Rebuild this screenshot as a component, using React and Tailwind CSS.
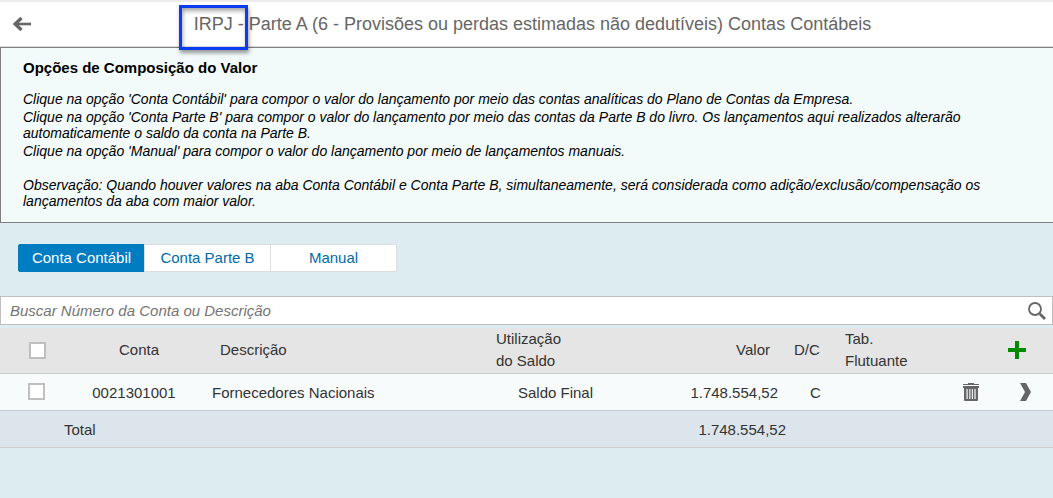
import React, { useState } from "react";

const TABS = ["Conta Contábil", "Conta Parte B", "Manual"];

const ROWS = [
  {
    conta: "0021301001",
    descricao: "Fornecedores Nacionais",
    saldo: "Saldo Final",
    valor: "1.748.554,52",
    dc: "C",
  },
];

function BackIcon() {
  return (
    <svg width="18" height="14" viewBox="0 0 18 14" fill="none" stroke="#666" strokeWidth="2.6">
      <path d="M2 7H18" />
      <path d="M8.5 1L2.2 7L8.5 13" strokeWidth="3.4" />
    </svg>
  );
}

function SearchIcon() {
  return (
    <svg width="18" height="18" viewBox="0 0 18 18" fill="none" stroke="#666">
      <circle cx="7" cy="7" r="6" strokeWidth="1.8" />
      <path d="M11 11L13 13" strokeWidth="1.6" />
      <path d="M12 12L17 17" strokeWidth="2.8" />
    </svg>
  );
}

function PlusIcon() {
  return (
    <svg width="18" height="18" viewBox="0 0 18 18" fill="#008a00">
      <path d="M7 0H11V7H18V11H11V18H7V11H0V7H7Z" />
    </svg>
  );
}

function TrashIcon() {
  return (
    <svg width="16" height="18" viewBox="0 0 16 18" fill="#666">
      <path d="M5 0H11V1H16V2H0V1H5Z" />
      <path
        fillRule="evenodd"
        d="M0 3H16V5H15V17Q15 18 14 18H2Q1 18 1 17V5H0ZM3.5 6V16H4.7V6ZM6.3 6V16H7.4V6ZM8.8 6V16H9.9V6ZM11.4 6V16H12.6V6Z"
      />
    </svg>
  );
}

function ChevronIcon() {
  return (
    <svg width="11" height="18" viewBox="0 0 11 18" fill="#666">
      <path d="M0 0H6L11 9L6 18H0L5 9Z" />
    </svg>
  );
}

function Checkbox({ label }) {
  return (
    <input
      type="checkbox"
      aria-label={label}
      className="block size-[17px] appearance-none border-2 border-[#bfbfbf] bg-white checked:bg-[#007cc0]"
    />
  );
}

function App() {
  const [tab, setTab] = useState(TABS[0]);
  const [search, setSearch] = useState("");

  return (
    <div className="min-h-screen bg-[#dcecf0] font-['Liberation_Sans',Arial,sans-serif] text-[#333]">
      {/* HEADER */}
      <header className="flex h-[47px] items-center border-t-2 border-b border-t-[#ececec] border-b-[#d9d9d9] bg-white">
        <button type="button" aria-label="Voltar" className="w-11 pl-[13px]">
          <BackIcon />
        </button>
        <h1 className="flex-1 pr-8 text-center text-[18px] text-[#666]">
          <span className="relative">
            IRPJ
            <span className="absolute -inset-x-[15px] -top-[9px] h-[45px] border-3 border-[#0a3cf0] shadow-[1px_3px_4px_rgba(0,0,0,0.4),inset_1px_3px_4px_rgba(0,0,0,0.35)]" />
          </span>{" "}
          - Parte A (6 - Provisões ou perdas estimadas não dedutíveis) Contas Contábeis
        </h1>
      </header>

      {/* INSTRUCTIONS */}
      <section className="border border-r-0 border-[#808080] bg-[#f2fafa] pt-3 pr-12 pb-[13px] pl-[22px] text-[14px] leading-4 text-black">
        <h2 className="mb-[15px] text-[15px] font-bold">Opções de Composição do Valor</h2>
        <div className="flex flex-col gap-0.5 italic">
          <p>
            Clique na opção 'Conta Contábil' para compor o valor do lançamento por meio das
            contas analíticas do Plano de Contas da Empresa.
          </p>
          <p>
            Clique na opção 'Conta Parte B' para compor o valor do lançamento por meio das
            contas da Parte B do livro. Os lançamentos aqui realizados alterarão
            automaticamente o saldo da conta na Parte B.
          </p>
          <p>
            Clique na opção 'Manual' para compor o valor do lançamento por meio de
            lançamentos manuais.
          </p>
          <p className="mt-4">
            Observação: Quando houver valores na aba Conta Contábil e Conta Parte B,
            simultaneamente, será considerada como adição/exclusão/compensação os
            lançamentos da aba com maior valor.
          </p>
        </div>
      </section>

      {/* TABS */}
      <div className="flex px-[18px] pt-[21px] pb-6">
        {TABS.map((name) => (
          <button
            key={name}
            type="button"
            onClick={() => setTab(name)}
            className={`h-7 w-[127px] border text-[15px] not-first:-ml-px first:rounded-l-xs last:rounded-r-xs ${
              tab === name
                ? "border-[#007cc0] bg-[#007cc0] text-white"
                : "border-[#ddd] bg-white text-[#006ca7]"
            }`}
          >
            {name}
          </button>
        ))}
      </div>

      {/* SEARCH */}
      <div className="mb-[3px] flex h-[29px] items-center border border-[#bfbfbf] bg-white pr-[6px]">
        <input
          type="text"
          aria-label="Buscar conta"
          value={search}
          onChange={(e) => setSearch(e.target.value)}
          placeholder="Buscar Número da Conta ou Descrição"
          className="h-full flex-1 px-[9px] text-[15px] placeholder:text-[#757575] placeholder:italic focus:outline-none"
        />
        <button type="button" aria-label="Buscar">
          <SearchIcon />
        </button>
      </div>

      {/* ACCOUNTS */}
      <table className="w-full table-fixed text-left text-[15px]">
        <colgroup>
          <col className="w-16" />
          <col className="w-[140px]" />
          <col />
          <col className="w-[120px]" />
          <col className="w-[182px]" />
          <col className="w-[46px]" />
          <col className="w-[110px]" />
          <col className="w-[50px]" />
          <col className="w-[57px]" />
        </colgroup>
        <thead>
          <tr className="h-[45px] border-b border-[#ccc] bg-[#e5e5e5] leading-[22px] *:font-normal">
            <th className="pl-[29px]">
              <Checkbox label="Selecionar todas" />
            </th>
            <th className="pr-[10px] pl-5 text-center">Conta</th>
            <th className="pl-4">Descrição</th>
            <th className="pr-8 pl-2">Utilização do Saldo</th>
            <th className="pr-5 text-right">Valor</th>
            <th className="pl-1">D/C</th>
            <th className="pr-8 pl-[9px]">Tab. Flutuante</th>
            <th />
            <th className="pl-3">
              <button type="button" aria-label="Adicionar" className="block">
                <PlusIcon />
              </button>
            </th>
          </tr>
        </thead>
        <tbody>
          {ROWS.map((row) => (
            <tr key={row.conta} className="h-[37px] border-b border-[#ccc] bg-[#f7fbfc]">
              <td className="pl-7">
                <Checkbox label={`Selecionar ${row.conta}`} />
              </td>
              <td className="pt-[3px] text-center">{row.conta}</td>
              <td className="pt-[3px] pl-2">{row.descricao}</td>
              <td className="pt-[3px] pl-[30px]">{row.saldo}</td>
              <td className="pt-[3px] pr-3 text-right">{row.valor}</td>
              <td className="pt-[3px] pl-5">{row.dc}</td>
              <td />
              <td className="pl-[17px]">
                <button type="button" aria-label="Excluir" className="block">
                  <TrashIcon />
                </button>
              </td>
              <td className="pl-6">
                <button type="button" aria-label="Abrir" className="block">
                  <ChevronIcon />
                </button>
              </td>
            </tr>
          ))}
        </tbody>
        <tfoot>
          <tr className="h-[37px] border-b border-[#ccc] bg-[#dde5ec]">
            <td />
            <td colSpan={3} className="pt-[3px]">Total</td>
            <td className="pt-[3px] pr-1 text-right">1.748.554,52</td>
            <td colSpan={4} />
          </tr>
        </tfoot>
      </table>
    </div>
  );
}

export default App;
